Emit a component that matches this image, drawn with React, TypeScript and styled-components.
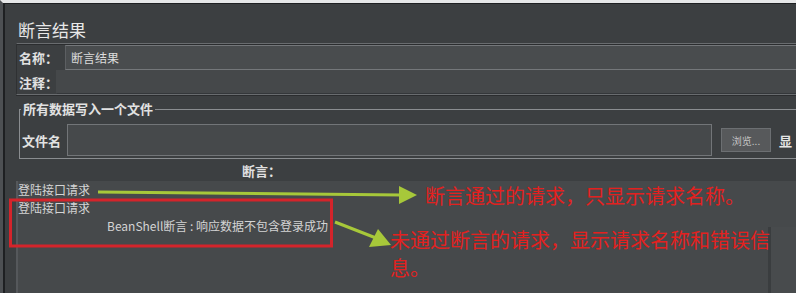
import React from "react";
import styled, { createGlobalStyle } from "styled-components";

const Global = createGlobalStyle`
  html, body { margin: 0; padding: 0; background: #3c3f41; }
  * { box-sizing: border-box; }
  body { font-family: "Noto Sans CJK SC", "Noto Sans", sans-serif; }
`;

const Root = styled.div`
  position: relative;
  width: 796px;
  height: 293px;
  overflow: hidden;
`;

const Window = styled.div`
  width: 796px;
  height: 293px;
  border-top: 3px solid #e6e7e8;
  border-left: 3px solid #4d5053;
  background: #3c3f41;
`;

const Frame = styled.div`
  height: 100%;
  border-top: 1px solid #1e2022;
  border-left: 2px solid #1e2022;
  display: flex;
  flex-direction: column;
  color: #d6d6d6;
`;

const Title = styled.div`
  height: 39px;
  padding: 0 0 4px 13px;
  display: flex;
  align-items: flex-end;
  font-size: 17px;
  line-height: 18px;
  color: #e8e8e8;
`;

const HeaderBlock = styled.div`
  margin-left: 11px;
  border-top: 1px solid #696c6f;
  border-bottom: 1px solid #696c6f;
  box-shadow: inset 0 1px 0 #2b2d2f, 0 1px 0 #2b2d2f;
  border-left: 1px solid #2f3133;
  padding-top: 1px;
`;

const FormRow = styled.div<{ $h: number }>`
  display: flex;
  align-items: stretch;
  height: ${(p) => p.$h}px;
`;

const Label = styled.div<{ $w: number }>`
  width: ${(p) => p.$w}px;
  flex: none;
  padding-left: 2px;
  font-size: 13px;
  font-weight: 700;
  color: #e2e2e2;
  display: flex;
  align-items: center;
  white-space: nowrap;
`;

const Field = styled.div<{ $flat?: boolean }>`
  flex: 1;
  background: ${(p) => (p.$flat ? "#45484a" : "#494c4e")};
  border-top: 1px solid ${(p) => (p.$flat ? "#45484a" : "#74777a")};
  border-bottom: 1px solid ${(p) => (p.$flat ? "#34373a" : "#74777a")};
  border-left: 1px solid ${(p) => (p.$flat ? "#45484a" : "#5c5f62")};
  font-size: 12px;
  color: #dcdcdc;
  padding-left: 5px;
  display: flex;
  align-items: center;
`;

const Group = styled.fieldset`
  margin: 4px 0 0 14px;
  padding: 0 0 2px 0;
  border: 1px solid #8a8d90;
  border-right: none;
  min-width: 0;
`;

const Legend = styled.legend`
  padding: 0 2px;
  margin-left: 1px;
  font-size: 13px;
  font-weight: 700;
  line-height: 20px;
  color: #e2e2e2;
`;

const FileRow = styled.div`
  display: flex;
  align-items: center;
  padding-top: 5px;
  height: 37px;
`;

const FileField = styled.div`
  width: 645px;
  height: 32px;
  flex: none;
  background: #46494b;
  border: 1px solid #727578;
`;

const BrowseButton = styled.button`
  margin-left: 9px;
  width: 50px;
  height: 24px;
  flex: none;
  background: #57595b;
  border: 1px solid #6c6f72;
  color: #c4c4c4;
  font-family: "Noto Sans CJK SC", sans-serif;
  font-size: 10px;
  padding: 0;
`;

const CutLabel = styled.span`
  margin-left: 8px;
  font-size: 13px;
  font-weight: 700;
  color: #e6e6e6;
  white-space: nowrap;
`;

const SectionHeader = styled.div`
  height: 22px;
  padding: 2px 0 0 237px;
  font-size: 13px;
  font-weight: 700;
  line-height: 20px;
  color: #e0e0e0;
`;

const ListArea = styled.div`
  flex: 1;
  margin-left: 11px;
  border-left: 2px solid #55585b;
  background: #46494b;
  display: flex;
`;

const TreeCol = styled.div`
  width: 750px;
  flex: none;
`;

const TreeItem = styled.div<{ $indent: number }>`
  height: 18px;
  line-height: 18px;
  padding-left: ${(p) => p.$indent}px;
  font-size: 12px;
  color: #d4d4d4;
  white-space: nowrap;
`;

const ScrollCol = styled.div`
  flex: 1;
  margin-top: 46px;
  border-left: 3px solid #3a3d3f;
  background: #484b4d;
`;

const Overlay = styled.div`
  position: absolute;
  inset: 0;
  pointer-events: none;
`;

const Marks = styled.svg`
  position: absolute;
  left: 0;
  top: 0;
`;

const Note = styled.div<{ $x: number; $y: number }>`
  position: absolute;
  left: ${(p) => p.$x}px;
  top: ${(p) => p.$y}px;
  font-size: 20px;
  line-height: 28px;
  color: #e3211f;
  white-space: nowrap;
  font-family: "Noto Sans CJK SC", sans-serif;
`;

const GREEN = "#a7c83a";
const RED = "#d4242b";

export default function App() {
  return (
    <Root>
      <Global />
      <Window>
        <Frame>
          <Title>断言结果</Title>
          <HeaderBlock>
            <FormRow $h={25}>
              <Label $w={48}>名称：</Label>
              <Field>断言结果</Field>
            </FormRow>
            <FormRow $h={24}>
              <Label $w={39}>注释：</Label>
              <Field $flat />
            </FormRow>
          </HeaderBlock>
          <Group>
            <Legend>所有数据写入一个文件</Legend>
            <FileRow>
              <Label $w={47}>文件名</Label>
              <FileField />
              <BrowseButton>浏览...</BrowseButton>
              <CutLabel>显</CutLabel>
            </FileRow>
          </Group>
          <SectionHeader>断言：</SectionHeader>
          <ListArea>
            <TreeCol>
              <TreeItem $indent={0}>登陆接口请求</TreeItem>
              <TreeItem $indent={0}>登陆接口请求</TreeItem>
              <TreeItem $indent={89}>BeanShell断言 : 响应数据不包含登录成功</TreeItem>
            </TreeCol>
            <ScrollCol />
          </ListArea>
        </Frame>
      </Window>
      <Overlay>
        <Marks width="796" height="293" viewBox="0 0 796 293">
          <rect x="10.5" y="200" width="321" height="46" fill="none" stroke={RED} strokeWidth="3" />
          <line x1="98" y1="192" x2="402" y2="195" stroke={GREEN} strokeWidth="3" />
          <polygon points="399,186 417,195 399,204" fill={GREEN} />
          <line x1="335" y1="222" x2="376" y2="238" stroke={GREEN} strokeWidth="3" />
          <polygon points="378,229 391,245 369,247" fill={GREEN} />
        </Marks>
        <Note $x={425} $y={182}>断言通过的请求，只显示请求名称。</Note>
        <Note $x={390} $y={226}>
          未通过断言的请求，显示请求名称和错误信
          <br />
          息。
        </Note>
      </Overlay>
    </Root>
  );
}
